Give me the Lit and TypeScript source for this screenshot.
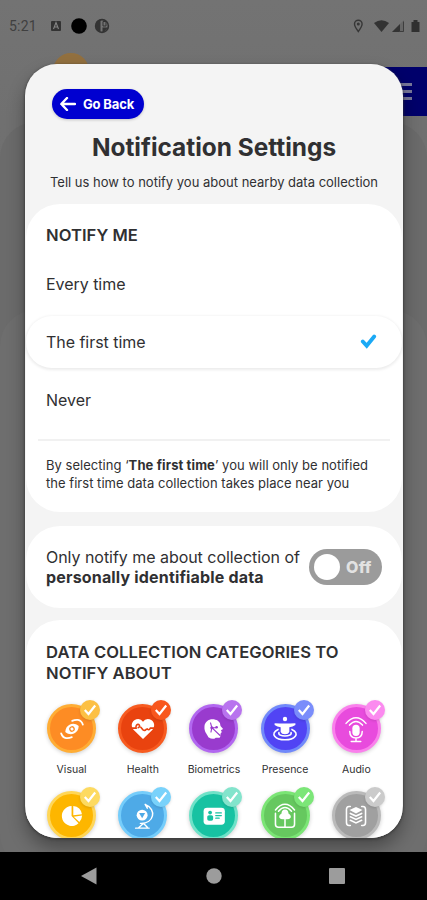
import { LitElement, html, svg, css } from "lit";
import { customElement, state } from "lit/decorators.js";
import { classMap } from "lit/directives/class-map.js";

const glyphs: Record<string, unknown> = {
  visual: svg`<g transform="rotate(-24 15 15)"><path d="M6.500 15C8.500 11 11.500 9.300 15 9.300S21.500 11 23.500 15C21.500 19 18.500 20.700 15 20.700S8.500 19 6.500 15Z" fill="#fff" stroke="none"/><circle cx="15" cy="15" r="2.500" stroke="var(--main)" stroke-width="1.500" fill="#fff"/><path stroke-width="2" d="M1.500 14.500Q1 19.500 4.500 21.800Q7.500 23.500 11 23.500M28.500 15.500Q29 10.500 25.500 8.200Q22.500 6.500 19 6.500"/></g>`,
  health: svg`<path fill="#fff" stroke="none" d="M15 26.500L4 16C-.5 10 3.500 3.500 9.500 3.500Q13 3.500 15 6.500Q17 3.500 20.500 3.500C26.500 3.500 30.500 10 26 16Z"/><path stroke="var(--main)" stroke-width="1.800" d="M2 14H7C6 8.500 12 8.500 11 12.500L9.500 13.500M12.500 13L15 16Q17 17.500 18.500 15.500L20 15Q22 17 23.500 14H28"/>`,
  biometrics: svg`<path fill="#fff" stroke="none" d="M19.500 5.500C13 1.500 4.500 4.500 4 12C3.500 18.500 7 20.500 8.500 24.500Q14 28 17 25H21.500Q23 24 22.500 20.500L24 18.500L23 16.500L25.500 15L22.500 11.500Q22.500 7.500 19.500 5.500Z"/><path stroke="var(--main)" stroke-width="1.300" d="M11 8L12.500 13.500H17M12.500 13.500L11.500 18.500M12.500 13.500L22 22.500"/><circle cx="12.500" cy="13.500" r="1.800" fill="var(--main)" stroke="none"/><circle cx="18" cy="13" r="1.500" fill="var(--main)" stroke="none"/>`,
  presence: svg`<circle cx="15" cy="3.500" r="2.500" fill="#fff" stroke="none"/><path fill="#fff" stroke="none" d="M3 8.500Q15 9 27 8.500V10.500Q24 12.500 20 13V18.500Q19 21 15 21Q11 21 10 18.500V13Q6 12.500 3 10.500Z"/><path stroke-width="1.800" d="M7 15.500C-3 20.500 4 27.500 15 27.500S33 20.500 23 15.500M8 19C6 24.500 24 24.500 22 19"/>`,
  audio: svg`<rect x="10.800" y="10" width="8.400" height="13" rx="4.200" fill="#fff" stroke="none"/><path stroke-width="1.700" d="M7.800 18Q8 25.500 15 25.500T22.200 18M15 25.500V29.500M9.500 29.500H20.500M3.500 8.500Q15-4.500 26.500 8.500M7.500 10.500Q15 2 22.500 10.500"/>`,
  usage: svg`<path fill="#fff" stroke="none" d="M14.500 15V3.500A11.500 11.500 0 1 0 22.500 23.500ZM16.500 3.500A11.500 11.500 0 0 1 26.500 13L16.500 14ZM17 16L26.700 14.500Q26.500 18.500 23.500 22Z"/>`,
  location: svg`<circle cx="14" cy="14" r="6.300" fill="#fff" stroke="none"/><path fill="var(--main)" stroke="none" d="M10.500 11.500L17.500 11.500L14 17.500Z"/><path stroke-width="1.700" d="M18 2C31 7 28 24 12 23.500M20 6L17.500 1.500M15 24L10 28.500M16 24L20 28M6.500 29H22"/>`,
  identity: svg`<rect x="3" y="5.500" width="24.500" height="19.500" rx="4" fill="#fff" stroke="none"/><circle cx="10.500" cy="11" r="2.200" fill="var(--main)" stroke="none"/><rect x="7.200" y="14" width="6.800" height="6.500" rx="2" fill="var(--main)" stroke="none"/><path stroke="var(--main)" stroke-width="1.400" d="M17 11.500H23.500M17 14.500H23.500M17 17.500H21"/>`,
  environment: svg`<path stroke-width="1.800" d="M4 12V24.500Q4 28 7.500 28H22.500Q26 28 26 24.500V12M4 8Q15-5 26 8M7.500 9.500Q15 1 22.500 9.500M15 16V27.500"/><path fill="#fff" stroke="none" d="M15 7.500C12 7.500 11 10 11 12Q7.500 14 8.500 17Q10.500 19.500 15 18.500Q19.500 19.500 21.500 17Q22.500 14 19 12C19 10 18 7.500 15 7.500Z"/>`,
  other: svg`<path stroke-width="1.800" d="M8.500 4H7Q4 4 4 7.500V22.500Q4 26 7 26H8.500M21.500 4H23Q26 4 26 7.500V22.500Q26 26 23 26H21.500"/><path fill="#fff" stroke="none" d="M15 4.500L22.500 8.200L15 12L7.500 8.200Z"/><path stroke-width="1.900" d="M8.500 12L15 15L21.500 12M8.500 16L15 19L21.500 16M8.500 20L15 23L21.500 20"/>`,
};

const categories = [
  { id: "visual", label: "Visual", main: "#fd8c24", ring: "#ffad35", badge: "#fcc044" },
  { id: "health", label: "Health", main: "#e9430f", ring: "#f75b20", badge: "#f8571d" },
  { id: "biometrics", label: "Biometrics", main: "#993bce", ring: "#b267f0", badge: "#b873ee" },
  { id: "presence", label: "Presence", main: "#5144f4", ring: "#7189fa", badge: "#7a8dfb" },
  { id: "audio", label: "Audio", main: "#e84bdd", ring: "#fa80ec", badge: "#fb8aef" },
  { id: "usage", label: "", main: "#fdb600", ring: "#ffd657", badge: "#fdda60" },
  { id: "location", label: "", main: "#4eaae7", ring: "#75cdfb", badge: "#79d2fb" },
  { id: "identity", label: "", main: "#17c2a2", ring: "#6fe2c8", badge: "#83e4cc" },
  { id: "environment", label: "", main: "#66c85f", ring: "#7be575", badge: "#7ce678" },
  { id: "other", label: "", main: "#a0a0a0", ring: "#bababa", badge: "#cbcbcb" },
];

@customElement("app-root")
export class AppRoot extends LitElement {
  @state() private frequency = "The first time";

  static styles = css`
    :host { display: block; position: relative; width: 427px; height: 900px; overflow: hidden; background: #707070; font-family: Inter, "Liberation Sans", sans-serif; color: #303032; }
    * { box-sizing: border-box; }
    svg { display: block; fill: none; }
    h1, h2, p { margin: 0; font-weight: inherit; }
    .backdrop { position: absolute; inset: 0 0 48px; overflow: hidden; background: linear-gradient(#737373 0, #707070 120px, #6c6c6c); }
    .sheet { position: absolute; left: 0; right: 0; border-radius: 36px; }
    .sheet.one { top: 122px; height: 720px; background: #6b6b6b; }
    .sheet.two { top: 310px; height: 560px; background: #6e6e6e; }
    .avatar { position: absolute; left: 53px; top: 53px; width: 36px; height: 36px; border-radius: 50%; background: #92703f; }
    .menu { position: absolute; right: 0; top: 67px; width: 50px; height: 49px; background: #00006b; display: flex; flex-direction: column; justify-content: center; gap: 4.500px; padding-left: 20px; }
    .menu i { display: block; width: 15px; height: 2.500px; background: #777799; }
    .status { position: absolute; inset: 0 0 auto; height: 52px; display: flex; align-items: center; justify-content: space-between; padding: 0 6px 0 9px; }
    .clock { font: 400 14px/20px Roboto, sans-serif; color: #404040; letter-spacing: .2px; }
    .notices { margin-left: 14px; }
    .group { display: flex; align-items: center; }
    .modal { position: absolute; left: 25px; top: 64px; width: 378px; height: 774px; border-radius: 32px; background: #f4f4f4; overflow: hidden; display: flex; flex-direction: column; }
    .shadow { position: absolute; left: 25px; top: 64px; width: 378px; height: 774px; border-radius: 32px; box-shadow: 0 1px 2px 1px #3338, 0 10px 18px #0005; }
    .back { margin: 24.500px 0 0 27px; width: 92px; height: 30px; flex: none; border: 0; border-radius: 15px; background: #0000d0; color: #fff; display: flex; align-items: center; gap: 7px; padding: 0 0 0 8px; font: 700 13px/30px Inter, sans-serif; letter-spacing: -.15px; box-shadow: 0 1px 3px #0003; white-space: nowrap; }
    .title { font-size: 24.400px; line-height: 30px; font-weight: 700; text-align: center; margin-top: 13.500px; white-space: nowrap; }
    .subtitle { font-size: 13px; line-height: 18px; text-align: center; margin-top: 11px; white-space: nowrap; }
    .card { background: #fff; flex: none; border-radius: 34px; margin: 0 1px; }
    .choices { height: 308px; margin-top: 13px; padding-top: 21px; }
    .heading { font-size: 16.600px; line-height: 21px; font-weight: 600; padding-left: 20px; white-space: nowrap; letter-spacing: .05px; }
    .options { margin-top: 12px; display: flex; flex-direction: column; gap: 6px; }
    .option { height: 52px; border-radius: 26px; display: flex; align-items: center; justify-content: space-between; padding: 0 25px 0 20px; font-size: 16px; letter-spacing: -.04px; }
    .option.on { box-shadow: 0 1px 3px 1px #00000014; }
    .rule { height: 2px; background: #f1f1f1; margin: 13px 12px 16px; }
    .note { font-size: 13px; line-height: 17.500px; padding-left: 20px; white-space: nowrap; letter-spacing: .03px; }
    .note b { font-weight: 700; letter-spacing: .12px; }
    .personal { height: 82px; margin-top: 14px; display: flex; align-items: center; justify-content: space-between; padding: 0 20px; font-size: 16px; line-height: 20.500px; }
    .personal p { white-space: nowrap; letter-spacing: -.04px; }
    .personal b { font-weight: 700; letter-spacing: .17px; }
    .toggle { width: 73px; height: 36px; border-radius: 18px; background: #9b9b9b; display: flex; align-items: center; gap: 6px; padding: 0 5px; color: #e2e2e2; font-size: 16px; font-weight: 800; letter-spacing: .3px; flex: none; }
    .knob { width: 26px; height: 26px; border-radius: 50%; background: #fff; }
    .categories { height: 240px; margin-top: 12px; padding-top: 22px; }
    .grid { display: grid; grid-template-columns: repeat(5, 71.200px); grid-auto-rows: 87px; margin: 20px 0 0 10px; }
    .item { display: flex; flex-direction: column; align-items: center; }
    .disc { position: relative; width: 49px; height: 49px; border-radius: 50%; background: var(--main); border: 3px solid var(--ring); display: grid; place-items: center; box-shadow: 0 1px 4px #0003; }
    .glyph { stroke: #fff; stroke-width: 1.900; overflow: visible; }
    .badge { position: absolute; left: 30px; top: -7.500px; width: 20px; height: 20px; border-radius: 50%; background: var(--badge); display: grid; place-items: center; box-shadow: 0 1px 3px #0002; }
    .label { font-size: 10.500px; line-height: 14px; margin-top: 9.500px; white-space: nowrap; }
    .nav { position: absolute; inset: auto 0 0; height: 48px; background: #000; display: flex; justify-content: center; align-items: center; gap: 107.500px; padding-right: 1px; }
  `;

  render() {
    return html`
      <div class="backdrop">
        <div class="sheet one"></div><div class="sheet two"></div>
        <div class="avatar"></div>
        <div class="menu"><i></i><i></i><i></i></div>
      </div>
      <div class="status">
        <div class="group">
          <span class="clock">5:21</span>
          <svg class="notices" width="62" height="18" viewBox="0 0 62 18">
            <rect x="0" y="4" width="10" height="10" rx="1" fill="#333"/><path d="M2.500 12L5 5.500L7.500 12M3.500 10H6.500" stroke="#858585" stroke-width="1.100"/>
            <circle cx="28" cy="9" r="7.800" fill="#000"/>
            <circle cx="51" cy="9" r="6.400" stroke="#333" stroke-width="1.600"/><path d="M45 5Q47 2.500 49.500 3V15.500Q43 13 45 5Z" fill="#333"/><path d="M52 4.500H55V9H52Z" stroke="#333" stroke-width="1"/><path d="M51.500 10.500H57L53 15H51.500Z" fill="#333"/>
          </svg>
        </div>
        <svg width="68" height="18" viewBox="0 0 68 18">
          <path d="M5.300 14.500Q1.500 9.500 1.500 7A3.800 3.800 0 0 1 9.100 7Q9.100 9.500 5.300 14.500Z" stroke="#373737" stroke-width="1.400"/><circle cx="5.300" cy="7" r="1.500" fill="#373737"/>
          <path d="M21 6Q28.500 .5 36 6L28.500 15Z" fill="#333"/>
          <path d="M51 3V15H39Z" fill="#666"/><path d="M47 7V15H39Z" fill="#333"/><path d="M50.500 4.500V14.500H46" stroke="#3d3d3d"/>
          <path d="M58.500 5H60.500V3H64.500V5H66.500V15H58.500Z" fill="#303030"/>
        </svg>
      </div>
      <div class="shadow"></div>
      <main class="modal">
        <button class="back">
          <svg width="16" height="14" viewBox="0 0 16 14" stroke="#fff" stroke-width="2.400" stroke-linecap="round" stroke-linejoin="round"><path d="M7 1L1.300 7L7 13M1.500 7H15"/></svg>Go Back
        </button>
        <h1 class="title">Notification Settings</h1>
        <p class="subtitle">Tell us how to notify you about nearby data collection</p>
        <section class="card choices">
          <h2 class="heading">NOTIFY ME</h2>
          <div class="options">
            ${["Every time", "The first time", "Never"].map((name) => html`
              <div class=${classMap({ option: true, on: name === this.frequency })} @click=${() => (this.frequency = name)}>
                <span>${name}</span>
                ${name === this.frequency ? html`<svg width="17" height="16" viewBox="0 0 17 16" stroke="#1ba9f5" stroke-width="3.800" stroke-linecap="round"><path d="M2.800 7.500L6.700 11.800L14.200 2.500"/></svg>` : null}
              </div>`)}
          </div>
          <div class="rule"></div>
          <p class="note">By selecting ‘<b>${this.frequency}</b>’ you will only be notified<br>the first time data collection takes place near you</p>
        </section>
        <section class="card personal">
          <p>Only notify me about collection of<br><b>personally identifiable data</b></p>
          <div class="toggle"><span class="knob"></span>Off</div>
        </section>
        <section class="card categories">
          <h2 class="heading">DATA COLLECTION CATEGORIES TO<br>NOTIFY ABOUT</h2>
          <div class="grid">
            ${categories.map((c) => html`
              <div class="item" style="--main:${c.main};--ring:${c.ring};--badge:${c.badge}">
                <div class="disc">
                  <svg class="glyph" width="26" height="26" viewBox="0 0 30 30" stroke-linecap="round">${glyphs[c.id]}</svg>
                  <span class="badge"><svg width="14" height="14" viewBox="0 0 14 14" stroke="#fff" stroke-width="2.200"><path d="M1.800 7L5.500 11L12.200 2.500"/></svg></span>
                </div>
                <span class="label">${c.label}</span>
              </div>`)}
          </div>
        </section>
      </main>
      <nav class="nav">
        <svg width="17" height="18" viewBox="0 0 17 18"><path d="M0 9L15.500 .5V17.500Z" fill="#9c9c9c"/></svg>
        <svg width="16" height="16" viewBox="0 0 16 16"><circle cx="8" cy="8" r="7.700" fill="#9c9c9c"/></svg>
        <svg width="16" height="16" viewBox="0 0 16 16"><rect width="16" height="16" rx="1" fill="#9c9c9c"/></svg>
      </nav>`;
  }
}
